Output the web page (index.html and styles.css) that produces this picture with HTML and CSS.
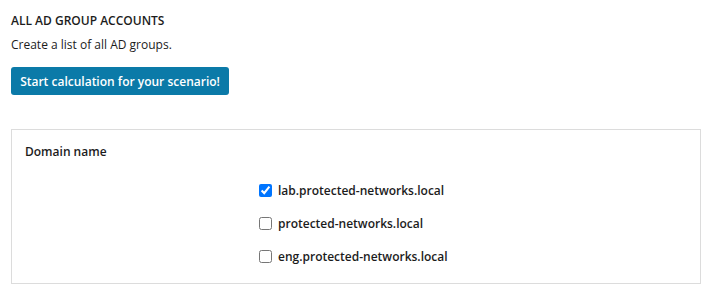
FILE: index.html
```html
<!DOCTYPE html>
<html>
<head>
<meta charset="utf-8">
<link rel="stylesheet" href="styles.css">
</head>
<body>
<div class="page">
  <h1 class="title">ALL AD GROUP ACCOUNTS</h1>
  <p class="desc">Create a list of all AD groups.</p>
  <button class="btn">Start calculation for your scenario!</button>
  <div class="panel">
    <div class="field-label">Domain name</div>
    <div class="options">
      <label class="option"><input type="checkbox" checked><span>lab.protected-networks.local</span></label>
      <label class="option"><input type="checkbox"><span>protected-networks.local</span></label>
      <label class="option"><input type="checkbox"><span>eng.protected-networks.local</span></label>
    </div>
  </div>
</div>
</body>
</html>
```
FILE: styles.css
```css
html, body {
  margin: 0;
  padding: 0;
  background: #fff;
}
body {
  font-family: "Open Sans", "Noto Sans", sans-serif;
  color: #1c1c1c;
  font-size: 12px;
}
.page {
  padding: 13px 20px 0 11px;
}
.title {
  margin: 0;
  font-size: 12px;
  font-weight: 600;
  line-height: 16px;
}
.desc {
  margin: 8px 0 0;
  line-height: 16px;
}
.btn {
  margin-top: 14px;
  display: block;
  width: 218px;
  height: 28px;
  padding: 0;
  border: none;
  border-radius: 3px;
  background: #0b7aa8;
  color: #fff;
  font-family: "Open Sans", "Noto Sans", sans-serif;
  font-size: 12px;
  font-weight: 600;
}
.panel {
  margin-top: 34px;
  border: 1px solid #dcdcdc;
  height: 155px;
  box-sizing: border-box;
  width: 690px;
  padding: 14px 14px 0 13px;
}
.field-label {
  font-weight: 600;
  line-height: 16px;
}
.options {
  margin-top: 22px;
  padding-left: 234px;
  display: flex;
  flex-direction: column;
  gap: 17px;
}
.option {
  display: flex;
  align-items: center;
  height: 16px;
  font-weight: 600;
}
.option input {
  margin: 0 6px 0 0;
  width: 13px;
  height: 13px;
}
```
